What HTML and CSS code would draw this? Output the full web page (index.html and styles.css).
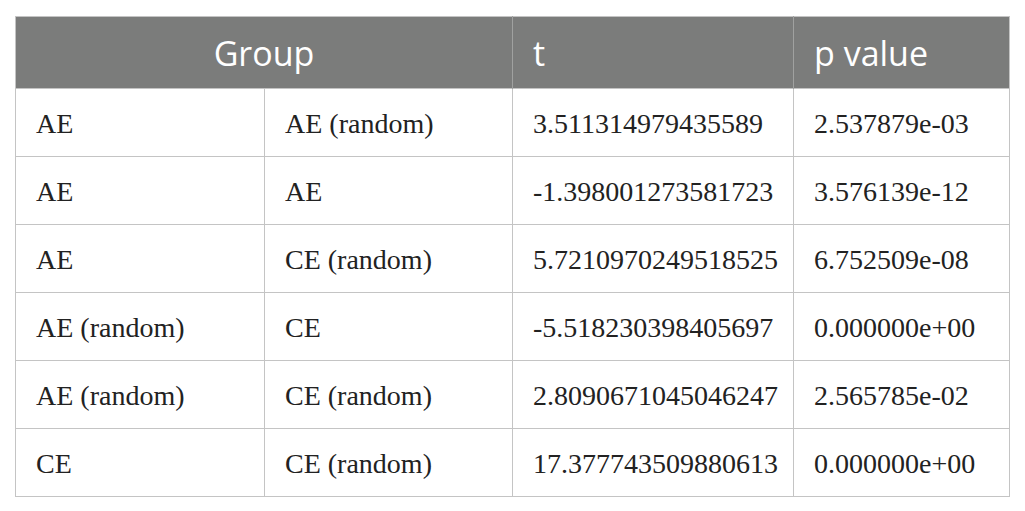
FILE: index.html
```
<!DOCTYPE html>
<html>
<head>
<meta charset="utf-8">
<link rel="stylesheet" href="styles.css">
</head>
<body>
<div class="wrap">
<table class="stats">
  <colgroup>
    <col class="c1"><col class="c2"><col class="c3"><col class="c4">
  </colgroup>
  <thead>
    <tr>
      <th colspan="2" class="center">Group</th>
      <th>t</th>
      <th>p value</th>
    </tr>
  </thead>
  <tbody>
    <tr><td>AE</td><td>AE (random)</td><td>3.511314979435589</td><td>2.537879e-03</td></tr>
    <tr><td>AE</td><td>AE</td><td>-1.398001273581723</td><td>3.576139e-12</td></tr>
    <tr><td>AE</td><td>CE (random)</td><td>5.7210970249518525</td><td>6.752509e-08</td></tr>
    <tr><td>AE (random)</td><td>CE</td><td>-5.518230398405697</td><td>0.000000e+00</td></tr>
    <tr><td>AE (random)</td><td>CE (random)</td><td>2.8090671045046247</td><td>2.565785e-02</td></tr>
    <tr><td>CE</td><td>CE (random)</td><td>17.377743509880613</td><td>0.000000e+00</td></tr>
  </tbody>
</table>
</div>
</body>
</html>
```
FILE: styles.css
```
html, body {
  margin: 0;
  padding: 0;
  background: #ffffff;
}
.wrap {
  padding: 16px 0 0 15px;
}
.stats {
  border-collapse: collapse;
  width: 994px;
  table-layout: fixed;
  border: 1px solid #c4c4c4;
}
.c1 { width: 249px; }
.c2 { width: 248px; }
.c3 { width: 281px; }
.c4 { width: 216px; }
.stats th {
  background: #7b7c7b;
  color: #ffffff;
  font-family: "Open Sans", "Noto Sans", sans-serif;
  font-weight: 400;
  font-size: 34px;
  text-align: left;
  height: 72px;
  padding: 0 0 0 20px;
  border-left: 1px solid #a0a1a0;
  box-sizing: border-box;
  vertical-align: middle;
}
.stats th.center {
  text-align: center;
  padding-left: 0;
  border-left: none;
}
.stats td {
  font-family: "Liberation Serif", "Times New Roman", serif;
  font-size: 28px;
  color: #222222;
  height: 68px;
  padding: 2px 0 0 20px;
  border: 1px solid #c4c4c4;
  box-sizing: border-box;
  vertical-align: middle;
  white-space: nowrap;
}
```
